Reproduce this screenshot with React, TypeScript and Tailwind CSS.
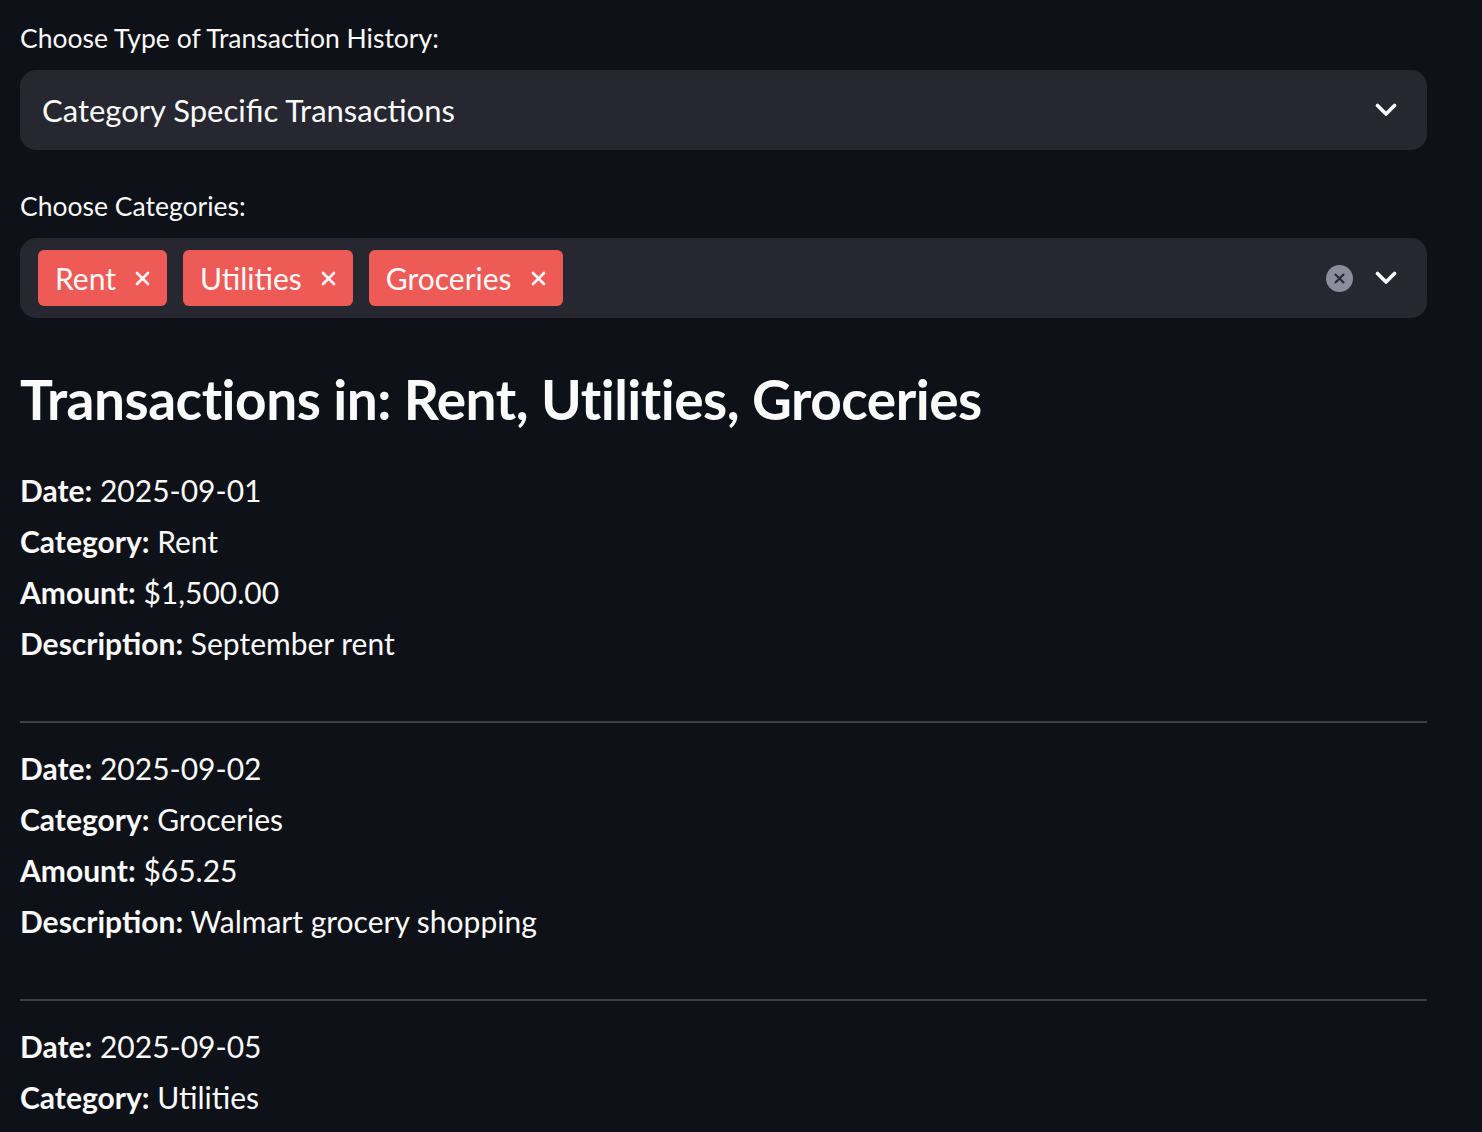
import { Fragment } from "react"

const transactions = [
  { date: "2025-09-01", category: "Rent", amount: "$1,500.00", description: "September rent" },
  { date: "2025-09-02", category: "Groceries", amount: "$65.25", description: "Walmart grocery shopping" },
  { date: "2025-09-05", category: "Utilities" },
]

const tags = ["Rent", "Utilities", "Groceries"]

function Chevron() {
  return (
    <svg width="22" height="14" viewBox="0 0 22 14" fill="none">
      <path d="M2.5 2.5 L11 11 L19.5 2.5" stroke="#fafafa" strokeWidth="3.6" strokeLinecap="round" strokeLinejoin="round" />
    </svg>
  )
}

function SmallX({ color, size = 15, width = 2.6 }: { color: string; size?: number; width?: number }) {
  return (
    <svg width={size} height={size} viewBox="0 0 15 15" fill="none">
      <path d="M2 2 L13 13 M13 2 L2 13" stroke={color} strokeWidth={width} strokeLinecap="round" />
    </svg>
  )
}

function Field({ label, value }: { label: string; value?: string }) {
  if (!value) return null
  return (
    <p className="h-[51px] leading-[51px]">
      <span className="font-bold">{label}:</span> {value}
    </p>
  )
}

export default function App() {
  return (
    <main
      className="h-screen w-full bg-[#0e1117] text-[#fafafa] pl-[20px] pr-[55px] pt-[18px] overflow-hidden"
      style={{ fontFamily: "Lato, 'Noto Sans', sans-serif" }}
    >
      <div className="flex flex-col">
        {/* select */}
        <label className="text-[26.5px] leading-[40px]">Choose Type of Transaction History:</label>
        <div className="mt-[12px] flex h-[80px] items-center justify-between rounded-[16px] bg-[#262730] pl-[22px] pr-[30px]">
          <span className="text-[31px]">Category Specific Transactions</span>
          <Chevron />
        </div>

        {/* multiselect */}
        <label className="mt-[36px] text-[26.5px] leading-[40px]">Choose Categories:</label>
        <div className="mt-[12px] flex h-[80px] items-center justify-between rounded-[16px] bg-[#262730] pl-[18px] pr-[30px]">
          <div className="flex gap-[16px]">
            {tags.map((t) => (
              <div key={t} className="flex h-[56px] items-center gap-[19px] rounded-[6px] bg-[#ee5b56] pl-[17px] pr-[17px]">
                <span className="text-[30px]">{t}</span>
                <SmallX color="#fafafa" />
              </div>
            ))}
          </div>
          <div className="flex items-center gap-[22px]">
            <div className="flex h-[27px] w-[27px] items-center justify-center rounded-full bg-[#8b8d9d]">
              <SmallX color="#262730" size={11} width={2.8} />
            </div>
            <Chevron />
          </div>
        </div>

        <h3 className="mt-[48px] text-[55px] font-bold leading-[67px] tracking-[-0.5px]">
          Transactions in: Rent, Utilities, Groceries
        </h3>

        <div className="mt-[32px] text-[30px]">
          {transactions.map((t, i) => (
            <Fragment key={i}>
              {i > 0 && (
                <>
                  <div className="mt-[52px] h-[2px] bg-[#3d4045]" />
                  <div className="h-[20px]" />
                </>
              )}
              <Field label="Date" value={t.date} />
              <Field label="Category" value={t.category} />
              <Field label="Amount" value={t.amount} />
              <Field label="Description" value={t.description} />
            </Fragment>
          ))}
        </div>
      </div>
    </main>
  )
}
